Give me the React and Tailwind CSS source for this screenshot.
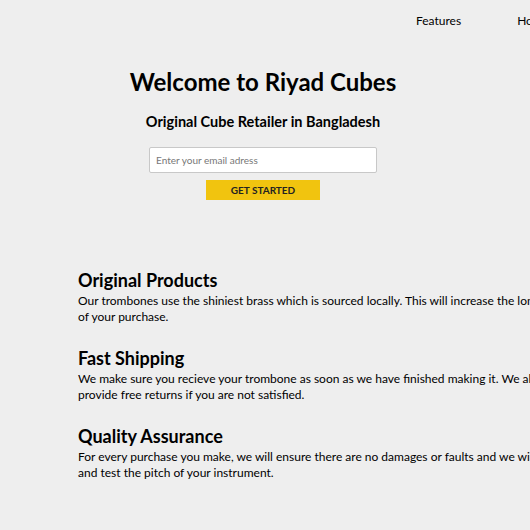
import React from 'react';

const features = [
  {
    title: 'Original Products',
    text: 'Our trombones use the shiniest brass which is sourced locally. This will increase the longevity of your purchase.',
  },
  {
    title: 'Fast Shipping',
    text: 'We make sure you recieve your trombone as soon as we have finished making it. We also provide free returns if you are not satisfied.',
  },
  {
    title: 'Quality Assurance',
    text: 'For every purchase you make, we will ensure there are no damages or faults and we will check and test the pitch of your instrument.',
  },
];

export default function App() {
  return (
    <div className="w-[530px] h-[530px] overflow-hidden bg-[#eeeeee] text-black font-['Lato',sans-serif]">
      {/* Top nav, runs past the right edge */}
      <header className="h-[42px] flex items-center pl-[416px] whitespace-nowrap">
        <nav className="flex gap-[56px] text-[12px]">
          <a href="#features">Features</a>
          <a href="#how">How It Works</a>
          <a href="#pricing">Pricing</a>
        </nav>
      </header>

      {/* Hero */}
      <section className="w-[526px] flex flex-col items-center pt-[25px]">
        <h1 className="text-[24px] font-bold leading-[30px]">Welcome to Riyad Cubes</h1>
        <h2 className="mt-[16px] text-[14.5px] font-bold leading-[18px]">Original Cube Retailer in Bangladesh</h2>
        <form className="mt-[16px] flex flex-col items-center">
          <input
            type="email"
            placeholder="Enter your email adress"
            className="w-[228px] h-[26px] px-[6px] bg-white border border-[#c8c8c8] rounded-[2px] text-[10px] placeholder:text-[#777777] outline-none"
          />
          <button
            type="button"
            className="mt-[7px] w-[114px] h-[20px] bg-[#f1c40f] text-[10px] font-bold leading-none uppercase text-[#222]"
          >
            Get Started
          </button>
        </form>
      </section>

      {/* Features */}
      <section className="pl-[78px] pt-[69px] flex flex-col gap-[22px]">
        {features.map((f) => (
          <div key={f.title} className="w-[500px]">
            <h3 className="text-[18px] font-bold leading-[22px]">{f.title}</h3>
            <p className="mt-[2px] text-[12px] leading-[16px]">{f.text}</p>
          </div>
        ))}
      </section>
    </div>
  );
}
